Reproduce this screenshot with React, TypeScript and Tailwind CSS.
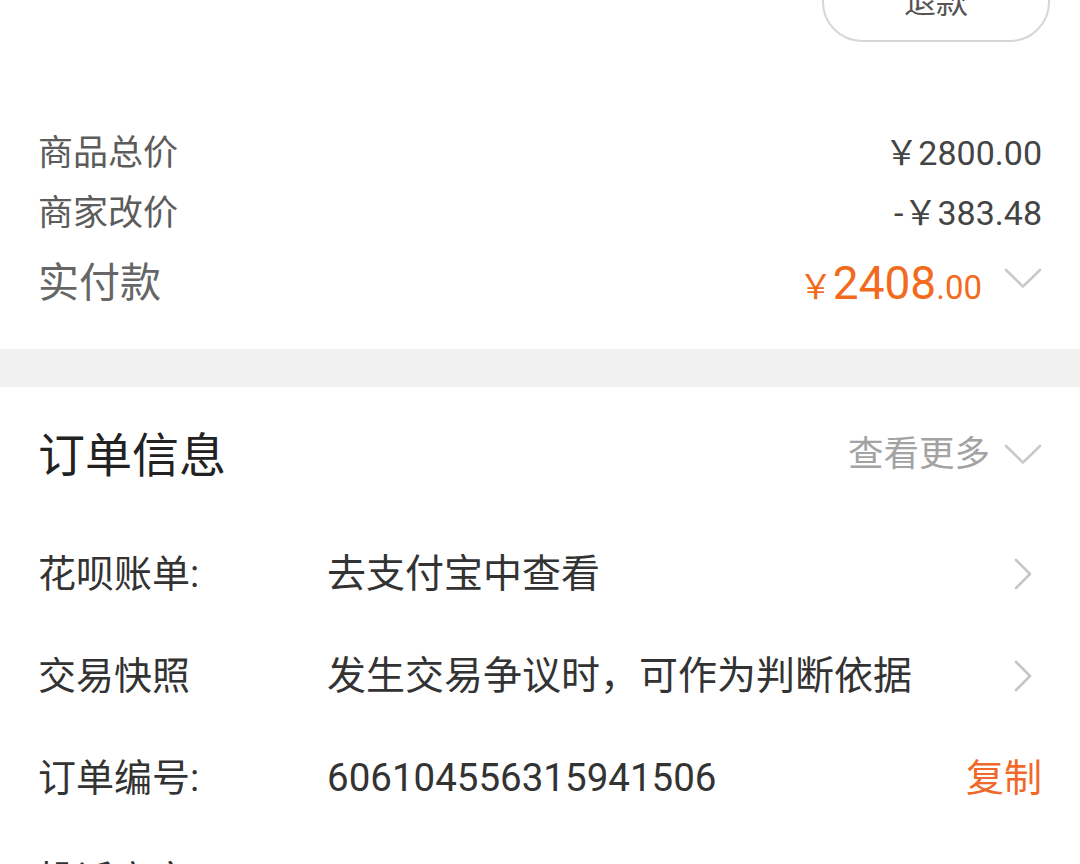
const font = { fontFamily: 'Roboto, "Noto Sans CJK SC", sans-serif' };

function ArrowDown({ className = '' }: { className?: string }) {
  return (
    <svg className={className} width="38" height="21" viewBox="0 0 38 21" fill="none">
      <path d="M2 2 L19 18.5 L36 2" stroke="#c9c9c9" strokeWidth="2.6" strokeLinecap="round" strokeLinejoin="round" />
    </svg>
  );
}

function ArrowRight() {
  return (
    <svg width="18" height="32" viewBox="0 0 18 32" fill="none" className="mr-[10px]">
      <path d="M2 2 L16 16 L2 30" stroke="#c6c6c6" strokeWidth="2.6" strokeLinecap="round" strokeLinejoin="round" />
    </svg>
  );
}

function PriceRow({ label, value }: { label: string; value: string }) {
  return (
    <div className="flex h-[60px] items-center justify-between">
      <span className="text-[35px] leading-none text-[#5c5c5c]">{label}</span>
      <span className="text-[34px] leading-none text-[#444]">{value}</span>
    </div>
  );
}

function InfoRow({ label, value, action, mono }: { label: string; value: string; action?: 'arrow' | 'copy'; mono?: boolean }) {
  return (
    <div className="flex h-[102px] items-center">
      <span className="w-[289px] shrink-0 text-[38px] leading-none text-[#333]">{label}</span>
      <span className={`flex-1 leading-none text-[#333] ${mono ? 'text-[38.5px]' : 'text-[39px]'}`}>{value}</span>
      {action === 'copy' ? (
        <span className="text-[38px] leading-none text-[#f0692a]">复制</span>
      ) : action === 'arrow' ? (
        <ArrowRight />
      ) : null}
    </div>
  );
}

export default function App() {
  return (
    <div className="h-[864px] w-[1080px] overflow-hidden bg-white" style={font}>
      <div className="flex h-[42px] justify-end pr-[30px]">
        <div className="mt-[-38px] flex h-[80px] w-[228px] shrink-0 items-center justify-center rounded-full border-2 border-[#d6d6d6] text-[32px] leading-none text-[#555]">
          退款
        </div>
      </div>

      <div className="px-[38px] pt-[81px] pb-[26px]">
        <PriceRow label="商品总价" value="￥2800.00" />
        <PriceRow label="商家改价" value="-￥383.48" />
        <div className="flex h-[80px] items-center justify-between">
          <span className="text-[41px] leading-none text-[#666]">实付款</span>
          <div className="flex items-center gap-[22px]">
            <span className="flex items-baseline leading-none text-[#f26b1d]">
              <span className="text-[34px]">￥</span>
              <span className="text-[46px]">2408</span>
              <span className="text-[33px]">.00</span>
            </span>
            <ArrowDown className="mt-[-10px]" />
          </div>
        </div>
      </div>

      <div className="h-[38px] bg-[#f1f1f1]" />

      <div className="px-[38px]">
        <div className="flex h-[136px] items-center justify-between">
          <span className="text-[47px] leading-none text-[#222]">订单信息</span>
          <div className="flex items-center gap-[14px]">
            <span className="text-[35.5px] leading-none text-[#a3a3a3]">查看更多</span>
            <ArrowDown className="mt-[-2px]" />
          </div>
        </div>
        <InfoRow label="花呗账单:" value="去支付宝中查看" action="arrow" />
        <InfoRow label="交易快照" value="发生交易争议时，可作为判断依据" action="arrow" />
        <InfoRow label="订单编号:" value="606104556315941506" action="copy" mono />
        <InfoRow label="投诉商家" value="" action="arrow" />
      </div>
    </div>
  );
}
